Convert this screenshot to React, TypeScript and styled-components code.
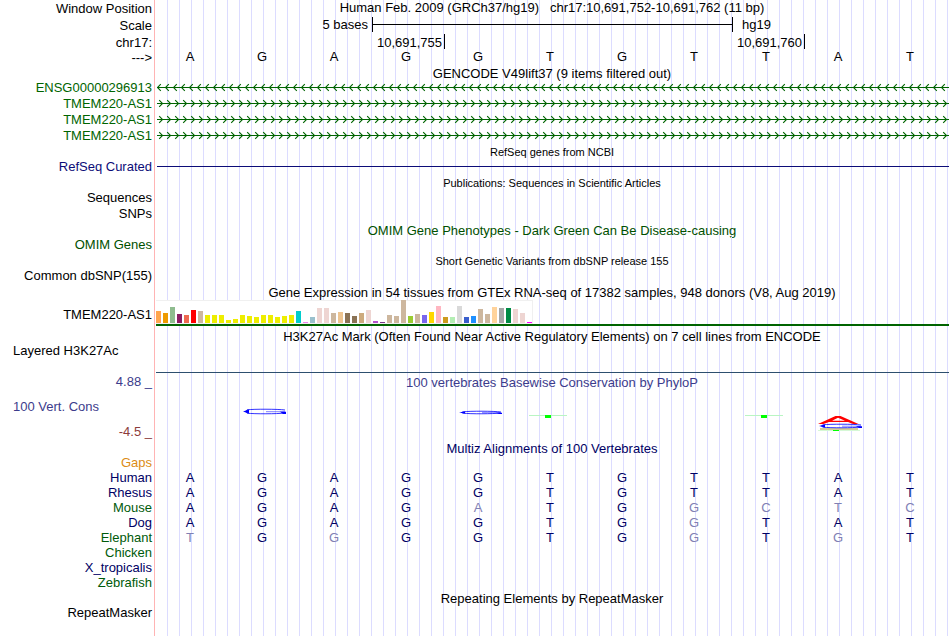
import React from "react";
import styled, { createGlobalStyle } from "styled-components";

const GlobalStyle = createGlobalStyle`
  body {
    margin: 0;
    background: #fff;
    color: #000;
    font-family: "Liberation Sans", Arial, sans-serif;
    font-size: 13px;
    line-height: 15px;
  }
`;

const Browser = styled.main`
  display: flex;
  flex-direction: column;
  min-height: 100vh;
  overflow: hidden;
`;

const Row = styled.section<{ $height: number }>`
  display: grid;
  grid-template-columns: 155px minmax(0, 1fr);
  height: ${(p) => p.$height}px;
  flex: none;
`;

const LastRow = styled(Row)`
  flex: 1 0 auto;
`;

const Side = styled.div<{ $color?: string; $line?: number }>`
  padding-right: 2px;
  border-right: 1px solid #ffb4b4;
  color: ${(p) => p.$color ?? "#000"};
  line-height: ${(p) => p.$line ?? 15}px;
  text-align: right;
  white-space: pre;
`;

const SideStart = styled(Side)`
  padding-left: 13px;
  text-align: left;
`;

const Track = styled.div<{ $line?: number }>`
  padding: 0 2px 0 1px;
  line-height: ${(p) => p.$line ?? 15}px;
  background-image: linear-gradient(to left, #dcdcff 1px, transparent 1px);
  background-size: calc(100% / 66) 100%;
  background-origin: content-box;
  background-clip: content-box;
`;

const Title = styled.h2<{ $color?: string; $small?: boolean }>`
  margin: 0;
  color: ${(p) => p.$color ?? "#000"};
  font-size: ${(p) => (p.$small ? 11 : 13)}px;
  font-weight: 400;
  text-align: center;
  white-space: pre;
`;

const Columns = styled.div`
  display: grid;
  grid-template-columns: repeat(11, minmax(0, 1fr));
`;

const Letters = styled(Columns)`
  margin: 0 2px 0 -2px;
  text-align: center;
`;

const Base = styled.span<{ $color: string }>`
  color: ${(p) => p.$color};
`;

const ScaleLabel = styled.span`
  grid-column: span 3;
  padding-right: 4px;
  text-align: right;
`;

const ScaleName = styled.span`
  grid-column: span 3;
  padding-left: 10px;
`;

const ScaleBar = styled.div`
  grid-column: span 5;
  display: flex;
  align-items: center;
  height: 15px;
  margin-right: -1px;
  border: solid #000;
  border-width: 0 1px;

  &::before {
    content: "";
    flex: 1;
    height: 1px;
    background: #000;
  }
`;

const Position = styled.span<{ $span: number }>`
  grid-column: span ${(p) => p.$span};
  height: 15px;
  margin-right: -1px;
  padding-right: 2px;
  border-right: 1px solid #000;
  text-align: right;
`;

const Lane = styled.div`
  margin: 0 -1px 0 1px;
`;

const Strand = styled.svg`
  display: block;
  width: 100%;
  height: 16px;
`;

const Rule = styled.div<{ $color: string; $top: number; $size: number }>`
  height: ${(p) => p.$size}px;
  border-top: ${(p) => p.$top}px solid transparent;
  background: ${(p) => p.$color};
  background-clip: padding-box;
`;

const WideRule = styled(Rule)`
  margin-right: -1px;
`;

const Expression = styled.div`
  display: flex;
  align-items: flex-end;
  gap: 2px;
  box-sizing: border-box;
  width: max-content;
  height: 24px;
  padding-right: 1px;
  background: #fff;
  box-shadow: inset 0 1px #f0f0f0, inset -1px -1px #f0f0f0;
`;

const Bar = styled.i<{ $height: number; $color: string }>`
  width: 5px;
  height: ${(p) => p.$height}px;
  margin-bottom: 1px;
  background: ${(p) => p.$color};
`;

const ConservationSide = styled(Side)`
  display: flex;
  flex-direction: column;
  gap: 10px;
  padding-top: 9px;
  padding-left: 13px;
`;

const ConservationName = styled.span`
  color: #3c3c8c;
  text-align: left;
`;

const Logo = styled.svg`
  display: block;
  width: 72px;
  height: 51px;
  justify-self: center;
`;

const GENE = "#006400";
const NAVY = "#000064";
const PALE = "#8080b4";
const LEAF = "#005a0a";

const reference = "AGAGGTGTTAT";

const genes = [
  { name: "ENSG00000296913", reverse: true },
  { name: "TMEM220-AS1", reverse: false },
  { name: "TMEM220-AS1", reverse: false },
  { name: "TMEM220-AS1", reverse: false },
];

const species = [
  { name: "Human", color: NAVY, bases: "AGAGGTGTTAT" },
  { name: "Rhesus", color: NAVY, bases: "AGAGGTGTTAT" },
  { name: "Mouse", color: LEAF, bases: "AGAGATGGCTC" },
  { name: "Dog", color: NAVY, bases: "AGAGGTGGTAT" },
  { name: "Elephant", color: LEAF, bases: "TGGGGTGGTGT" },
  { name: "Chicken", color: LEAF, bases: "" },
  { name: "X_tropicalis", color: NAVY, bases: "" },
  { name: "Zebrafish", color: LEAF, bases: "" },
];

const brain = "#eeee00";
const tan = "#cdb79e";
const rose = "#eed5d2";

const tissues: [number, string][] = [
  [12, "#ffa54f"], [10, "#ee9a00"], [16, "#8fbc8f"], [9, "#8b1c62"],
  [8, "#ee6a50"], [13, "#ff0000"], [12, tan], [8, brain], [8, brain],
  [8, brain], [3, brain], [4, brain], [8, brain], [7, brain], [6, brain],
  [8, brain], [8, brain], [6, brain], [7, brain], [8, brain],
  [12, "#00cdcd"], [1, "#ee82ee"], [6, "#9ac0cd"], [15, rose], [15, rose],
  [10, tan], [11, "#eec591"], [10, "#8b7355"], [7, "#8b7355"],
  [10, "#cdaa7d"], [13, rose], [2, "#b452cd"], [1, "#7a378b"], [8, tan],
  [7, tan], [23, tan], [7, "#9acd32"], [9, tan], [8, "#7a67ee"],
  [11, "#ffd700"], [17, "#ffb6c1"], [6, "#cd9b1d"], [6, "#b4eeb4"],
  [17, "#d9d9d9"], [6, "#3a5fcd"], [7, "#1e90ff"], [14, tan], [9, tan],
  [16, "#ffd39b"], [15, "#a6a6a6"], [15, "#008b45"], [14, rose],
  [10, rose], [1, "#ff00ff"],
];

function Chevrons({ reverse, id }: { reverse: boolean; id: string }) {
  return (
    <Strand aria-hidden="true">
      <defs>
        <pattern id={id} width="8" height="16" patternUnits="userSpaceOnUse">
          <path
            d={reverse ? "M3.8 4.2 L0.5 7.5 L3.8 10.8" : "M2.2 4.2 L5.5 7.5 L2.2 10.8"}
            fill="none"
            stroke={GENE}
            strokeWidth="1.1"
          />
        </pattern>
      </defs>
      <rect width="100%" height="16" fill={`url(#${id})`} />
      <rect y="7" width="100%" height="1" fill={GENE} />
    </Strand>
  );
}

function FlatG({ y, height }: { y: number; height: number }) {
  const mid = y + height / 2;
  const end = y + height;
  return (
    <g>
      <path
        d={`M57 ${y + 1} C50 ${y} 26 ${y} 19 ${y + 0.8} Q16 ${mid} 19 ${end - 0.8} C26 ${end} 50 ${end} 56 ${end - 1}`}
        fill="none"
        stroke="#0000ff"
        strokeWidth="0.8"
      />
      <path d={`M15 ${mid} L21 ${y + 0.4} V${end - 0.4} Z`} fill="#0000ff" />
      <path d={`M38 ${mid + 0.2} H57`} stroke="#0000ff" strokeWidth="0.5" />
      <path d={`M52 ${mid + 0.2} H58 V${end} H55 Z`} fill="#0000ff" />
    </g>
  );
}

function FlatT() {
  return (
    <g>
      <rect x="13" y="25" width="38" height="1" fill="#b9f5c3" />
      <rect x="29" y="25" width="6" height="3" fill="#00ff00" />
    </g>
  );
}

function StackedLogo() {
  return (
    <g>
      <path
        d="M14 34 L31.5 26 H36.5 L54.5 34 H49 L44 31.9 H25 L19.5 34 Z M28 30.7 H41 L34 27.7 Z"
        fill="#ff0000"
        fillRule="evenodd"
      />
      <rect x="16" y="38" width="38" height="2" fill="#d4cd98" />
      <rect x="14" y="40" width="42" height="1" fill="#d6f8d6" />
      <rect x="29" y="40" width="6" height="1" fill="#00ff00" />
      <FlatG y={34} height={4} />
    </g>
  );
}

function conservation(index: number) {
  if (index === 1) return <FlatG y={19} height={5} />;
  if (index === 4) return <FlatG y={21} height={3} />;
  if (index === 5 || index === 8) return <FlatT />;
  if (index === 9) return <StackedLogo />;
  return null;
}

function TitleRow(props: {
  text: string;
  height?: number;
  line?: number;
  color?: string;
  small?: boolean;
}) {
  return (
    <Row $height={props.height ?? 15}>
      <Side />
      <Track $line={props.line}>
        <Title $color={props.color} $small={props.small}>{props.text}</Title>
      </Track>
    </Row>
  );
}

function EmptyRow(props: { name: string; height?: number; color?: string }) {
  return (
    <Row $height={props.height ?? 16}>
      <Side $color={props.color}>{props.name}</Side>
      <Track />
    </Row>
  );
}

export default function App() {
  return (
    <>
      <GlobalStyle />
      <Browser>
        <Row $height={17}>
          <Side $line={17}>Window Position</Side>
          <Track>
            <Title>{"Human Feb. 2009 (GRCh37/hg19)   chr17:10,691,752-10,691,762 (11 bp)"}</Title>
          </Track>
        </Row>
        <Row $height={17}>
          <Side $line={17}>Scale</Side>
          <Track>
            <Columns>
              <ScaleLabel>5 bases</ScaleLabel>
              <ScaleBar />
              <ScaleName>hg19</ScaleName>
            </Columns>
          </Track>
        </Row>
        <Row $height={16}>
          <Side $line={17}>chr17:</Side>
          <Track $line={17}>
            <Columns>
              <Position $span={4}>10,691,755</Position>
              <Position $span={5}>10,691,760</Position>
            </Columns>
          </Track>
        </Row>
        <Row $height={16}>
          <Side>{"--->"}</Side>
          <Track $line={13}>
            <Letters>
              {[...reference].map((base, i) => (
                <Base key={i} $color="#000">{base}</Base>
              ))}
            </Letters>
          </Track>
        </Row>

        <TitleRow text="GENCODE V49lift37 (9 items filtered out)" height={14} />
        {genes.map((gene, i) => (
          <Row key={i} $height={16}>
            <Side $color={GENE}>{gene.name}</Side>
            <Track>
              <Lane>
                <Chevrons reverse={gene.reverse} id={`strand-${i}`} />
              </Lane>
            </Track>
          </Row>
        ))}

        <TitleRow text="RefSeq genes from NCBI" line={17} small />
        <Row $height={16}>
          <Side $color="#0c0c78">RefSeq Curated</Side>
          <Track>
            <Lane>
              <Rule $color="#0c0c78" $top={7} $size={1} />
            </Lane>
          </Track>
        </Row>

        <TitleRow text="Publications: Sequences in Scientific Articles" line={17} small />
        <EmptyRow name="Sequences" />
        <EmptyRow name="SNPs" />

        <TitleRow
          text="OMIM Gene Phenotypes - Dark Green Can Be Disease-causing"
          color="#005000"
          line={17}
        />
        <EmptyRow name="OMIM Genes" color="#005000" />

        <TitleRow text="Short Genetic Variants from dbSNP release 155" line={17} small />
        <EmptyRow name="Common dbSNP(155)" height={17} />

        <TitleRow text="Gene Expression in 54 tissues from GTEx RNA-seq of 17382 samples, 948 donors (V8, Aug 2019)" />
        <Row $height={29}>
          <Side $line={29}>TMEM220-AS1</Side>
          <Track>
            <Expression>
              {tissues.map(([height, color], i) => (
                <Bar key={i} $height={height} $color={color} />
              ))}
            </Expression>
            <WideRule $color="#006400" $top={0} $size={2} />
          </Track>
        </Row>

        <TitleRow text="H3K27Ac Mark (Often Found Near Active Regulatory Elements) on 7 cell lines from ENCODE" />
        <Row $height={31}>
          <SideStart $line={13}>Layered H3K27Ac</SideStart>
          <Track>
            <WideRule $color="#2d4f6e" $top={28} $size={1} />
          </Track>
        </Row>

        <Row $height={15}>
          <Side $color="#3c3c8c" $line={13}>4.88 _</Side>
          <Track>
            <Title $color="#3c3c8c">100 vertebrates Basewise Conservation by PhyloP</Title>
          </Track>
        </Row>
        <Row $height={51}>
          <ConservationSide $color="#8c3c3c">
            <ConservationName>100 Vert. Cons</ConservationName>
            <span>-4.5 _</span>
          </ConservationSide>
          <Track>
            <Columns>
              {[...reference].map((_, i) => (
                <Logo key={i} viewBox="0 0 72 51" aria-hidden="true">
                  {conservation(i)}
                </Logo>
              ))}
            </Columns>
          </Track>
        </Row>

        <TitleRow text="Multiz Alignments of 100 Vertebrates" color={NAVY} height={14} />
        <EmptyRow name="Gaps" color="#dc8c14" height={15} />
        {species.map((item) => (
          <Row key={item.name} $height={15}>
            <Side $color={item.color}>{item.name}</Side>
            <Track>
              <Letters>
                {[...item.bases].map((base, i) => (
                  <Base key={i} $color={base === reference[i] ? NAVY : PALE}>{base}</Base>
                ))}
              </Letters>
            </Track>
          </Row>
        ))}

        <TitleRow text="Repeating Elements by RepeatMasker" line={17} />
        <LastRow $height={31}>
          <Side>RepeatMasker</Side>
          <Track />
        </LastRow>
      </Browser>
    </>
  );
}
